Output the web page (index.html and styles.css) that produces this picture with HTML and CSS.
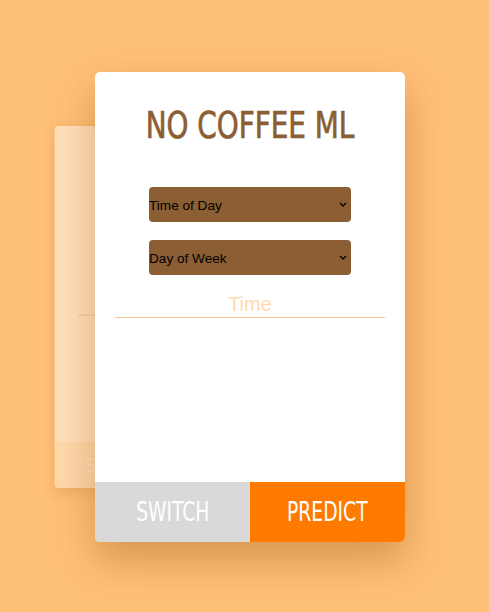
FILE: index.html
```html
<!DOCTYPE html>
<html>
<head>
<meta charset="utf-8">
<link rel="stylesheet" href="styles.css">
</head>
<body>
<div class="stage">
  <div class="card back">
    <div class="card-body">
      <div class="back-line"></div>
    </div>
    <div class="actions back-actions">
      <div class="btn"><span class="btn-label">SWITCH</span></div>
      <div class="btn"></div>
    </div>
  </div>
  <div class="card front">
    <div class="card-body">
      <h1 class="title"><span class="title-text">NO COFFEE ML</span></h1>
      <div class="select-wrap">
        <select class="select"><option>Time of Day</option></select>
        <svg class="chev" width="8" height="5" viewBox="0 0 8 5"><path d="M1 1 L4 4 L7 1" fill="none" stroke="#000" stroke-width="1.3"/></svg>
      </div>
      <div class="select-wrap">
        <select class="select"><option>Day of Week</option></select>
        <svg class="chev" width="8" height="5" viewBox="0 0 8 5"><path d="M1 1 L4 4 L7 1" fill="none" stroke="#000" stroke-width="1.3"/></svg>
      </div>
      <input class="time" type="text" placeholder="Time">
    </div>
    <div class="actions">
      <button class="btn switch"><span class="btn-label">SWITCH</span></button>
      <button class="btn predict"><span class="btn-label">PREDICT</span></button>
    </div>
  </div>
</div>
</body>
</html>
```
FILE: styles.css
```css
html, body {
  margin: 0;
  padding: 0;
}
body {
  background: #ffc077;
  width: 489px;
  height: 612px;
  overflow: hidden;
  font-family: "Liberation Sans", Arial, sans-serif;
}
.stage {
  position: relative;
  width: 310px;
  margin: 72px 0 0 95px;
}
.card {
  width: 310px;
  height: 470px;
  border-radius: 5px;
  overflow: hidden;
  display: flex;
  flex-direction: column;
}
.front {
  position: relative;
  background: #fff;
  box-shadow: 0 18px 40px rgba(140, 70, 0, 0.35);
}
.back {
  position: absolute;
  left: 0;
  top: 0;
  transform: translateX(-76px) scale(0.77);
  background: rgba(255, 255, 255, 0.5);
  box-shadow: 0 6px 16px rgba(140, 70, 0, 0.15);
}
.card-body {
  flex: 1;
  display: flex;
  flex-direction: column;
  align-items: center;
}
.back-line {
  margin-top: 245px;
  width: 250px;
  height: 1px;
  background: #f5b87a;
}
.title {
  margin: 30px 0 0;
  font-family: "DejaVu Sans Condensed", sans-serif;
  font-weight: normal;
  font-size: 38px;
  line-height: 46px;
  color: #8b5e34;
  -webkit-text-stroke: 0.7px #8b5e34;
  white-space: nowrap;
}
.title-text {
  display: inline-block;
  transform: scaleX(0.815);
}
.select-wrap {
  position: relative;
  width: 202px;
  height: 35px;
  margin-top: 18px;
}
.select-wrap:first-of-type {
  margin-top: 39px;
}
.select {
  -webkit-appearance: none;
  appearance: none;
  width: 100%;
  height: 100%;
  border: none;
  border-radius: 4px;
  background: #8b5e34;
  color: #000;
  font-family: "Liberation Sans", Arial, sans-serif;
  font-size: 13.6px;
  padding: 1px 0 0;
  outline: none;
}
.chev {
  position: absolute;
  right: 4px;
  top: 15px;
}
.time {
  margin-top: 12px;
  width: 270px;
  height: 31px;
  border: none;
  border-bottom: 1px solid #f7c692;
  outline: none;
  text-align: center;
  font-family: "Liberation Sans", Arial, sans-serif;
  font-size: 20px;
  padding: 5px 0 0;
  box-sizing: border-box;
  background: transparent;
}
.time::placeholder {
  color: #ffd9b0;
}
.actions {
  display: flex;
  height: 60px;
}
.btn {
  flex: 1;
  border: none;
  margin: 0;
  padding: 0;
  font-family: "DejaVu Sans Condensed", sans-serif;
  font-size: 26px;
  color: #fff;
  display: flex;
  align-items: center;
  justify-content: center;
}
.btn-label {
  display: inline-block;
  transform: scaleX(0.8);
}
.switch {
  background: #d9d9d9;
}
.predict {
  background: #ff7b00;
}
.back-actions {
  background: rgba(255, 200, 140, 0.35);
}
.back-actions .btn {
  color: rgba(255, 255, 255, 0.35);
}
```
